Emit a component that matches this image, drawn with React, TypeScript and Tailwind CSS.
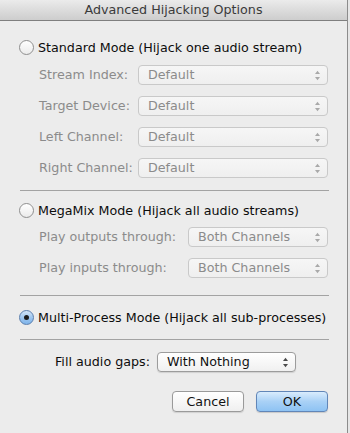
import React from "react";

const font = { fontFamily: '"DejaVu Sans", "Liberation Sans", sans-serif' };

function Arrows({ disabled }: { disabled?: boolean }) {
  const c = disabled ? "#a9a9a9" : "#4a4a4a";
  return (
    <svg width="7" height="11" viewBox="0 0 7 11">
      <path d="M3.5 0.8 L6 4 H1 Z" fill={c} />
      <path d="M3.5 10.2 L6 7 H1 Z" fill={c} />
    </svg>
  );
}

function Select({ value, width, disabled }: { value: string; width: number; disabled?: boolean }) {
  return (
    <div
      style={{ width }}
      className={
        disabled
          ? "flex items-center justify-between h-[20px] rounded-[4px] border border-[#c9c9c9] bg-linear-to-b from-[#f6f6f6] to-[#efefef] pl-[9px] pr-[6px] text-[#8b8b8b]"
          : "flex items-center justify-between h-[20px] rounded-[4px] border border-[#9c9c9c] bg-linear-to-b from-[#ffffff] to-[#f0f0f0] pl-[9px] pr-[6px] text-[#111] shadow-[0_1px_1px_rgba(0,0,0,0.12)]"
      }
    >
      <span className="leading-[18px]">{value}</span>
      <Arrows disabled={disabled} />
    </div>
  );
}

function Radio({ checked, label }: { checked?: boolean; label: string }) {
  return (
    <div className="flex items-center h-[15px] pl-[19px] gap-[4px]">
      {checked ? (
        <div className="w-[15px] h-[15px] rounded-full border border-[#5b7fae] bg-linear-to-b from-[#d4e6f8] via-[#9fc7f0] to-[#7fb4ea] flex items-center justify-center">
          <div className="w-[5px] h-[5px] rounded-full bg-[#1c1c1c]" />
        </div>
      ) : (
        <div className="w-[15px] h-[15px] rounded-full border border-[#8f8f8f] bg-linear-to-b from-[#ffffff] to-[#ebebeb]" />
      )}
      <span className="text-[#0d0d0d] leading-[15px]">{label}</span>
    </div>
  );
}

function Row({ label, labelWidth, selectWidth }: { label: string; labelWidth: number; selectWidth: number }) {
  return (
    <div className="flex items-center pl-[39px]">
      <span style={{ width: labelWidth }} className="text-[#8b8b8b] shrink-0">
        {label}
      </span>
      <Select value={labelWidth > 100 ? "Both Channels" : "Default"} width={selectWidth} disabled />
    </div>
  );
}

function Separator({ mt }: { mt: string }) {
  return <div className={`${mt} ml-[20px] w-[309px] h-px bg-[#a3a3a3]`} />;
}

export default function App() {
  return (
    <div style={font} className="w-[350px] h-[433px] bg-[#e6e6e6] overflow-hidden text-[12.7px]">
      <div className="w-[348px] h-[433px] bg-[#ececec] border-r border-[#8c8c8c] flex flex-col">
        <div className="h-[21px] shrink-0 border-b border-[#7f7f7f] bg-linear-to-b from-[#ebebeb] to-[#cdcdcd] flex items-center justify-center text-[#3a3a3a] leading-[20px]">
          Advanced Hijacking Options
        </div>

        <div className="mt-[19px]">
          <Radio label="Standard Mode (Hijack one audio stream)" />
        </div>
        <div className="mt-[10px] flex flex-col gap-[11px]">
          <Row label="Stream Index:" labelWidth={99} selectWidth={190} />
          <Row label="Target Device:" labelWidth={99} selectWidth={190} />
          <Row label="Left Channel:" labelWidth={99} selectWidth={190} />
          <Row label="Right Channel:" labelWidth={99} selectWidth={190} />
        </div>

        <Separator mt="mt-[12px]" />

        <div className="mt-[12px]">
          <Radio label="MegaMix Mode (Hijack all audio streams)" />
        </div>
        <div className="mt-[9px] flex flex-col gap-[11px]">
          <Row label="Play outputs through:" labelWidth={149} selectWidth={140} />
          <Row label="Play inputs through:" labelWidth={149} selectWidth={140} />
        </div>

        <Separator mt="mt-[17px]" />

        <div className="mt-[14px]">
          <Radio checked label="Multi-Process Mode (Hijack all sub-processes)" />
        </div>

        <Separator mt="mt-[14px]" />

        <div className="mt-[12px] flex items-center pl-[55px] gap-[7px]">
          <span className="text-[#0d0d0d]">Fill audio gaps:</span>
          <Select value="With Nothing" width={139} />
        </div>

        <div className="mt-[19px] flex justify-end pr-[19px] gap-[12px]">
          <button className="w-[72px] h-[21px] rounded-[4px] border border-[#9a9a9a] bg-linear-to-b from-[#ffffff] to-[#efefef] text-[#111] leading-[19px] shadow-[0_1px_1px_rgba(0,0,0,0.12)]">
            Cancel
          </button>
          <button className="w-[72px] h-[21px] rounded-[4px] border border-[#6186b8] bg-linear-to-b from-[#d9ecfd] via-[#a9d1f6] to-[#8ec3f3] text-[#111] leading-[19px] shadow-[0_1px_1px_rgba(0,0,0,0.15)]">
            OK
          </button>
        </div>
      </div>
    </div>
  );
}
